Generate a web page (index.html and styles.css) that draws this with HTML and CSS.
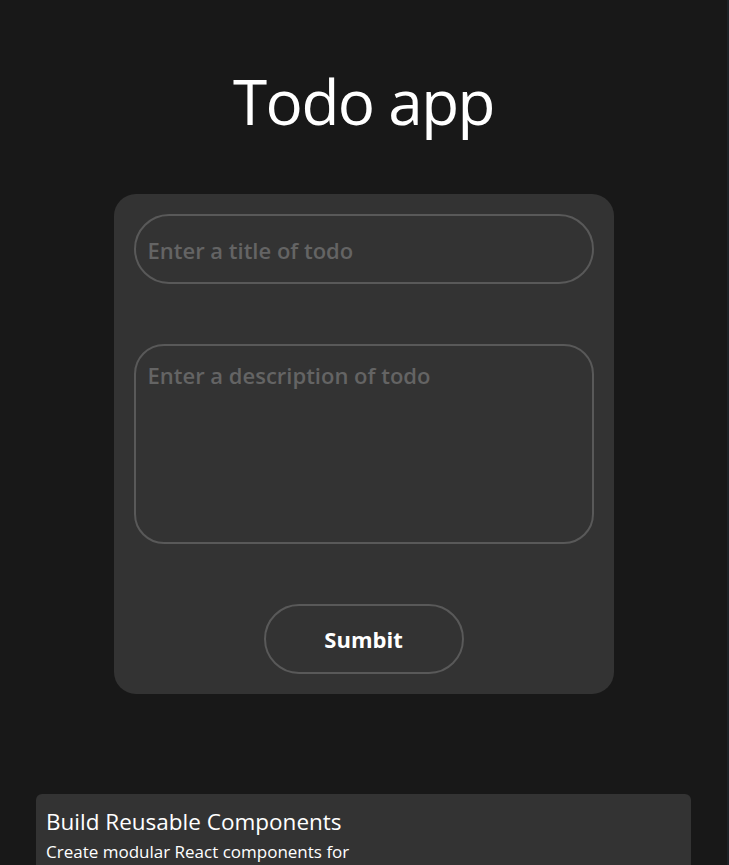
FILE: index.html
```html
<!DOCTYPE html>
<html lang="en">
<head>
<meta charset="utf-8">
<title>Todo app</title>
<link rel="stylesheet" href="styles.css">
</head>
<body>
<div class="app">
  <h1 class="title">Todo app</h1>
  <form class="todo-form">
    <input class="field field-title" type="text" placeholder="Enter a title of todo">
    <textarea class="field field-desc" placeholder="Enter a description of todo"></textarea>
    <button class="submit" type="button">Sumbit</button>
  </form>
  <ul class="todo-list">
    <li class="todo-item">
      <h2 class="todo-title">Build Reusable Components</h2>
      <p class="todo-desc">Create modular React components for reusability across the whole application.</p>
    </li>
  </ul>
</div>
</body>
</html>
```

FILE: styles.css
```css
* { box-sizing: border-box; }
html, body { height: 100%; }
body {
  margin: 0;
  background: #181818;
  color: #ffffff;
  font-family: "Open Sans", "Noto Sans", sans-serif;
  overflow: hidden;
  border-right: 2px solid #1d2226;
}
.app {
  display: flex;
  flex-direction: column;
  align-items: center;
  padding-top: 56px;
}
.title {
  margin: 0;
  font-size: 62px;
  font-weight: 400;
  line-height: 90px;
  letter-spacing: -1.5px;
}
.todo-form {
  margin-top: 48px;
  width: 500px;
  height: 500px;
  background: #333333;
  border-radius: 22px;
  padding: 20px;
  display: flex;
  flex-direction: column;
  align-items: center;
  gap: 60px;
}
.field {
  width: 460px;
  background: transparent;
  border: 2px solid #595959;
  color: #ffffff;
  font-family: inherit;
  font-size: 22px;
  font-weight: 600;
  padding: 0 12px;
  outline: none;
}
.field::placeholder { color: #646464; }
.field-title {
  height: 70px;
  border-radius: 35px;
  padding-top: 2px;
}
.field-desc {
  height: 200px;
  border-radius: 30px;
  padding-top: 14px;
  resize: none;
}
.submit {
  width: 200px;
  height: 70px;
  border-radius: 35px;
  border: 2px solid #595959;
  background: transparent;
  color: #ffffff;
  font-family: inherit;
  font-size: 22px;
  font-weight: 700;
}
.todo-list {
  list-style: none;
  margin: 100px 0 0;
  padding: 0;
  width: 655px;
  align-self: flex-start;
  margin-left: 36px;
}
.todo-item {
  background: #333333;
  border-radius: 6px;
  padding: 13px 10px;
}
.todo-title {
  margin: 0;
  font-size: 22.5px;
  font-weight: 400;
  line-height: 30px;
}
.todo-desc {
  margin: 2px 0 0;
  width: 350px;
  font-size: 17px;
  line-height: 26px;
}
```
